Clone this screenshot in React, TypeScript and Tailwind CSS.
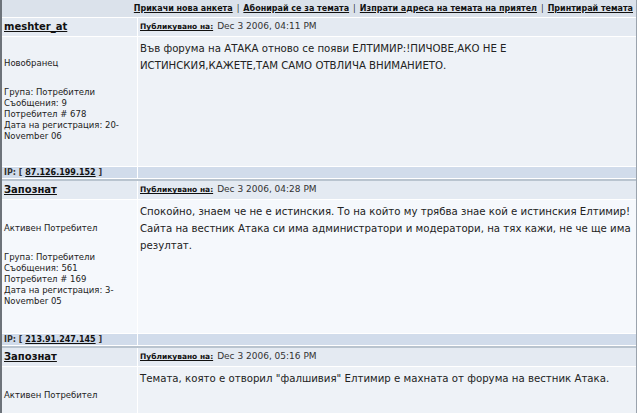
import React from "react";

type Post = {
  name: string;
  rank: string;
  date: string;
  lines: string[];
  posts: string;
  num: string;
  reg1: string;
  reg2: string;
  ip: string;
  alt: boolean;
  tall: boolean;
};

const posts: Post[] = [
  {
    name: "meshter_at",
    rank: "Новобранец",
    date: "Dec 3 2006, 04:11 PM",
    lines: [
      "Във форума на АТАКА отново се появи ЕЛТИМИР:!ПИЧОВЕ,АКО НЕ Е",
      "ИСТИНСКИЯ,КАЖЕТЕ,ТАМ САМО ОТВЛИЧА ВНИМАНИЕТО.",
    ],
    posts: "9",
    num: "678",
    reg1: "Дата на регистрация: 20-",
    reg2: "November 06",
    ip: "87.126.199.152",
    alt: true,
    tall: false,
  },
  {
    name: "Запознат",
    rank: "Активен Потребител",
    date: "Dec 3 2006, 04:28 PM",
    lines: [
      "Спокойно, знаем че не е истинския. То на който му трябва знае кой е истинския Елтимир!",
      "Сайта на вестник Атака си има администратори и модератори, на тях кажи, не че ще има",
      "резултат.",
    ],
    posts: "561",
    num: "169",
    reg1: "Дата на регистрация: 3-",
    reg2: "November 05",
    ip: "213.91.247.145",
    alt: false,
    tall: true,
  },
  {
    name: "Запознат",
    rank: "Активен Потребител",
    date: "Dec 3 2006, 05:16 PM",
    lines: [
      "Темата, която е отворил \"фалшивия\" Елтимир е махната от форума на вестник Атака.",
    ],
    posts: "561",
    num: "169",
    reg1: "Дата на регистрация: 3-",
    reg2: "November 05",
    ip: "213.91.247.145",
    alt: true,
    tall: true,
  },
];

function PostBlock({ p }: { p: Post }) {
  const body = p.alt ? "bg-[#eef2f7]" : "bg-[#f5f8fc]";
  const pad = p.tall ? "pt-[23px] pb-[26px]" : "pt-[21px] pb-[24px]";
  return (
    <div>
      <div className="grid grid-cols-[135px_1fr] gap-px bg-white">
        <div className="h-[18px] bg-[#e4eaf2] pl-[2px] flex items-center">
          <span className="text-[10px] font-bold underline text-[#111] leading-none">
            {p.name}
          </span>
        </div>
        <div className="h-[18px] bg-[#e4eaf2] pl-[2px] flex items-center text-[7.5px] text-[#333]">
          <span className="font-bold underline text-[#111]">Публикувано на:</span>
          <span className="ml-[4px] text-[9px]">{p.date}</span>
        </div>
        <div className={`${body} ${pad} pl-[2px] text-[8.5px] leading-[11px] text-[#222]`}>
          <div>{p.rank}</div>
          <div className="mt-[18px]">Група: Потребители</div>
          <div>Съобщения: {p.posts}</div>
          <div>Потребител # {p.num}</div>
          <div>{p.reg1}</div>
          <div>{p.reg2}</div>
        </div>
        <div className={`${body} pl-[2px] pt-[3px] text-[10.2px] leading-[17px] text-[#222]`}>
          {p.lines.map((l, i) => (
            <div key={i} className="whitespace-nowrap">
              {l}
            </div>
          ))}
        </div>
        <div className="h-[11px] bg-[#d1dceb] pl-[2px] flex items-center text-[8px] font-bold text-[#333]">
          IP: [&nbsp;<span className="underline text-[#111]">{p.ip}</span>&nbsp;]
        </div>
        <div className="h-[11px] bg-[#d1dceb]" />
      </div>
      <div className="h-px bg-white" />
      <div className="h-[2px] bg-[#b9c4cf]" />
    </div>
  );
}

export default function App() {
  return (
    <div className="w-[640px] h-[413px] overflow-hidden bg-white font-['DejaVu_Sans',sans-serif]">
      <div className="w-[637px] border-l-2 border-l-[#6d737a] border-r border-r-[#9aa3ad] bg-white">
        <div className="h-[17px] bg-[#dbe2eb] flex items-center justify-end pr-[3px] text-[8px] text-[#333]">
          <span className="font-bold underline text-[#111]">Прикачи нова анкета</span>
          <span className="mx-[4px]">|</span>
          <span className="font-bold underline text-[#111]">Абонирай се за темата</span>
          <span className="mx-[4px]">|</span>
          <span className="font-bold underline text-[#111]">Изпрати адреса на темата на приятел</span>
          <span className="mx-[4px]">|</span>
          <span className="font-bold underline text-[#111]">Принтирай темата</span>
        </div>
        <div className="h-px bg-white" />
        {posts.map((p, i) => (
          <PostBlock key={i} p={p} />
        ))}
      </div>
    </div>
  );
}
